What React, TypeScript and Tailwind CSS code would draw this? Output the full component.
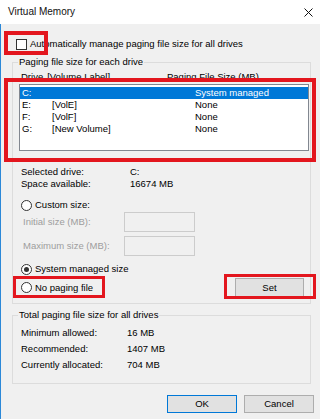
import React from "react";

function Radio({ checked }: { checked?: boolean }) {
  return (
    <span className="w-[11px] h-[11px] rounded-full border border-[#333333] bg-white flex items-center justify-center shrink-0">
      {checked ? <span className="w-[5px] h-[5px] rounded-full bg-[#333333]" /> : null}
    </span>
  );
}

export default function App() {
  const drives = [
    { d: "C:", l: "", s: "System managed", sel: true },
    { d: "E:", l: "[VolE]", s: "None" },
    { d: "F:", l: "[VolF]", s: "None" },
    { d: "G:", l: "[New Volume]", s: "None" },
  ];
  return (
    <div className="relative w-[320px] h-[419px] overflow-hidden bg-[#f0f0f0] text-black text-[9.5px] leading-[12px] [font-family:'Liberation_Sans',Arial,sans-serif] flex flex-col">
      <div className="h-[24px] bg-white flex items-center justify-between pl-[8px] pr-[7px] shrink-0">
        <span className="text-[10px] text-[#111]">Virtual Memory</span>
        <svg width="9" height="9" viewBox="0 0 9 9">
          <path d="M0.5 0.5L8.5 8.5M8.5 0.5L0.5 8.5" stroke="#111" strokeWidth="1" />
        </svg>
      </div>
      <div className="flex-1 border-l border-[#2b88d8] flex flex-col">
        <div className="mt-[13px] h-[14px] pl-[15px] flex items-center gap-[3px]">
          <span className="w-[11px] h-[11px] border border-[#333333] bg-white shrink-0" />
          <span>Automatically manage paging file size for all drives</span>
        </div>

        <div className="relative mt-[11px] ml-[11px] w-[299px] h-[242px] border border-[#dcdcdc] flex flex-col shrink-0">
          <span className="absolute -top-[7px] left-[5px] px-[1px] bg-[#f0f0f0]">Paging file size for each drive</span>
          <div className="mt-[8px] h-[12px] flex pl-[8px]">
            <span className="w-[146px] flex gap-[4px]">
              <span>Drive</span>
              <span>[Volume Label]</span>
            </span>
            <span>Paging File Size (MB)</span>
          </div>
          <div className="mt-[1px] ml-[6px] w-[290px] h-[67px] border border-[#828790] bg-white pt-[2px] flex flex-col">
            {drives.map((r) => (
              <div
                key={r.d}
                className={
                  "h-[12px] flex items-center pl-[2px] " +
                  (r.sel ? "bg-[#0078d7] text-white" : "")
                }
              >
                <span className="w-[30px]">{r.d}</span>
                <span className="w-[143px]">{r.l}</span>
                <span>{r.s}</span>
              </div>
            ))}
          </div>

          <div className="mt-[15px] h-[12px] flex pl-[8px]">
            <span className="w-[109px]">Selected drive:</span>
            <span>C:</span>
          </div>
          <div className="h-[12px] flex pl-[8px]">
            <span className="w-[109px]">Space available:</span>
            <span>16674 MB</span>
          </div>

          <div className="mt-[8px] h-[14px] flex items-center pl-[8px] gap-[3px]">
            <Radio />
            <span>Custom size:</span>
          </div>
          <div className="h-[20px] flex items-center pl-[10px]">
            <span className="w-[101px] text-[#9d9d9d]">Initial size (MB):</span>
            <span className="w-[71px] h-[20px] border border-[#cccccc] bg-[#f0f0f0]" />
          </div>
          <div className="mt-[4px] h-[20px] flex items-center pl-[10px]">
            <span className="w-[101px] text-[#9d9d9d]">Maximum size (MB):</span>
            <span className="w-[71px] h-[20px] border border-[#cccccc] bg-[#f0f0f0]" />
          </div>

          <div className="mt-[6px] h-[14px] flex items-center pl-[8px] gap-[3px]">
            <Radio checked />
            <span>System managed size</span>
          </div>
          <div className="mt-[2px] h-[19px] flex items-center justify-between pl-[8px] pr-[6px]">
            <span className="flex items-center gap-[3px]">
              <Radio />
              <span>No paging file</span>
            </span>
            <span className="w-[69px] h-[19px] border border-[#adadad] bg-[#e1e1e1] flex items-center justify-center">
              Set
            </span>
          </div>
        </div>

        <div className="relative mt-[11px] ml-[11px] w-[299px] h-[69px] border border-[#dcdcdc] flex flex-col shrink-0">
          <span className="absolute -top-[7px] left-[5px] px-[1px] bg-[#f0f0f0]">Total paging file size for all drives</span>
          <div className="mt-[9px] h-[16px] leading-[16px] flex pl-[8px]">
            <span className="w-[106px]">Minimum allowed:</span>
            <span>16 MB</span>
          </div>
          <div className="h-[16px] leading-[16px] flex pl-[8px]">
            <span className="w-[106px]">Recommended:</span>
            <span>1407 MB</span>
          </div>
          <div className="h-[16px] leading-[16px] flex pl-[8px]">
            <span className="w-[106px]">Currently allocated:</span>
            <span>704 MB</span>
          </div>
        </div>

        <div className="mt-[11px] flex justify-end gap-[7px] pr-[6px]">
          <span className="w-[70px] h-[18px] border border-[#0078d7] bg-[#e1e1e1] flex items-center justify-center">OK</span>
          <span className="w-[70px] h-[18px] border border-[#adadad] bg-[#e1e1e1] flex items-center justify-center">Cancel</span>
        </div>
      </div>

      <div className="absolute left-[4px] top-[31px] w-[44px] h-[24px] border-4 border-[#e3161e]" />
      <div className="absolute left-[4px] top-[78px] w-[312px] h-[84px] border-4 border-[#e3161e]" />
      <div className="absolute left-[13px] top-[276px] w-[92px] h-[22px] border-[3px] border-[#e3161e]" />
      <div className="absolute left-[224px] top-[274px] w-[92px] h-[25px] border-[3px] border-[#e3161e]" />
    </div>
  );
}
